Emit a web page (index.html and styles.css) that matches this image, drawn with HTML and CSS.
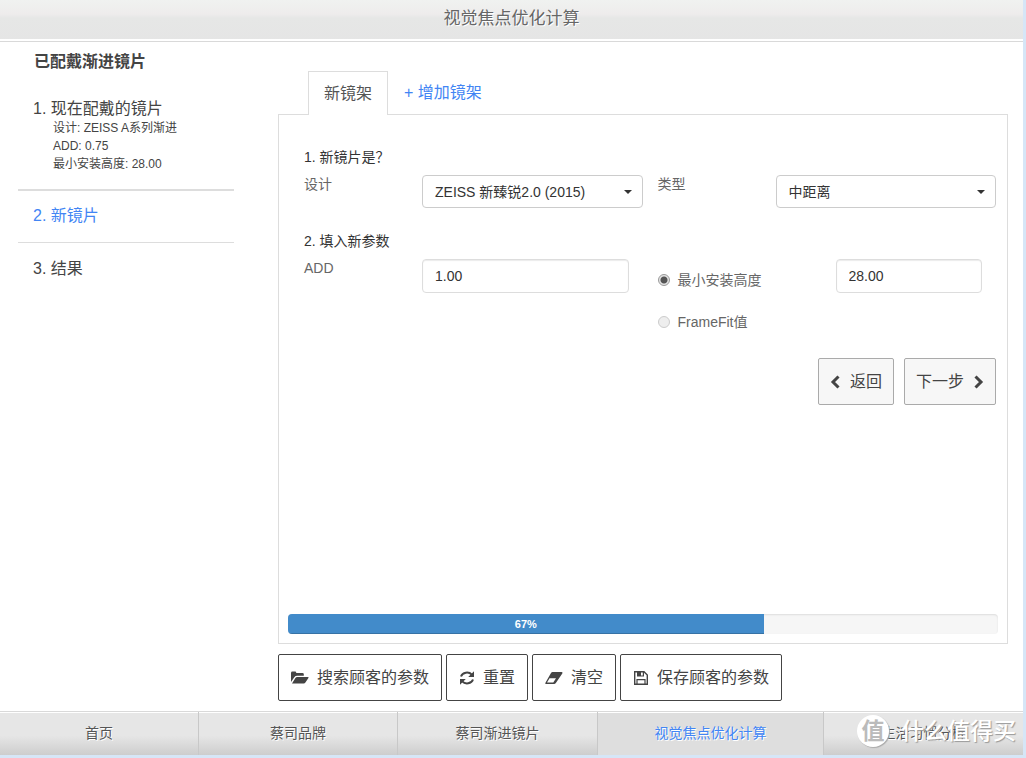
FILE: index.html
```html
<!DOCTYPE html>
<html lang="zh-CN">
<head>
<meta charset="utf-8">
<meta name="viewport" content="width=device-width, initial-scale=1">
<title>视觉焦点优化计算</title>
<link rel="stylesheet" href="styles.css">
</head>
<body>
<div class="app">
  <header class="topbar"><h1 class="topbar-title">视觉焦点优化计算</h1></header>

  <div class="content">
    <aside class="sidebar">
      <h2 class="sidebar-title">已配戴渐进镜片</h2>
      <section class="step step-done">
        <h3 class="step-title">1. 现在配戴的镜片</h3>
        <ul class="step-details">
          <li>设计: ZEISS A系列渐进</li>
          <li>ADD: 0.75</li>
          <li>最小安装高度: 28.00</li>
        </ul>
      </section>
      <section class="step step-active"><h3 class="step-title">2. 新镜片</h3></section>
      <section class="step"><h3 class="step-title">3. 结果</h3></section>
    </aside>

    <main class="main">
      <div class="tabs">
        <button type="button" class="tab tab-active">新镜架</button>
        <button type="button" class="tab">+ 增加镜架</button>
      </div>

      <div class="panel">
        <form class="form">
          <h3 class="form-heading">1. 新镜片是？</h3>
          <div class="form-row">
            <div class="field">
              <label class="field-label" for="design">设计</label>
              <div class="select-wrap"><select class="control select" id="design"><option>ZEISS 新臻锐2.0 (2015)</option></select></div>
            </div>
            <div class="field">
              <label class="field-label" for="type">类型</label>
              <div class="select-wrap"><select class="control select" id="type"><option>中距离</option></select></div>
            </div>
          </div>

          <h3 class="form-heading">2. 填入新参数</h3>
          <div class="form-row">
            <div class="field field-inset">
              <label class="field-label" for="add">ADD</label>
              <input class="control input" id="add" type="text" value="1.00">
            </div>
            <div class="field field-inset">
              <div class="radios">
                <label class="radio-label"><input class="radio" type="radio" name="mode" checked>最小安装高度</label>
                <label class="radio-label"><input class="radio" type="radio" name="mode">FrameFit值</label>
              </div>
              <input class="control input" type="text" value="28.00" aria-label="最小安装高度">
            </div>
          </div>

          <div class="form-actions">
            <button type="button" class="btn btn-soft">
              <svg class="chevron" viewBox="0 0 10 14" aria-hidden="true"><path d="M8.500 1.500 3 7l5.500 5.500"/></svg>返回
            </button>
            <button type="button" class="btn btn-soft">
              下一步<svg class="chevron" viewBox="0 0 10 14" aria-hidden="true"><path d="M1.500 1.500 7 7l-5.500 5.500"/></svg>
            </button>
          </div>
        </form>

        <div class="progress" role="progressbar" aria-valuenow="67" aria-valuemin="0" aria-valuemax="100">
          <div class="progress-bar" style="width: 67%">67%</div>
        </div>
      </div>

      <div class="toolbar">
        <button type="button" class="btn">
          <svg class="icon icon-wide" viewBox="0 0 18 14" aria-hidden="true"><path fill="currentColor" d="M0 11V2Q0 .6 1.400.6H4Q5.300.6 5.300 2h6.200q1.300 0 1.300 1.300v1.500H6.200Q4.400 4.800 3.300 6.200zM1 12.400 4.400 7Q5 6 6.200 6H17q1 0 .4 1l-3 4.600q-.6 1-1.700 1H1.200z"/></svg>搜索顾客的参数
        </button>
        <button type="button" class="btn">
          <svg class="icon" viewBox="0 0 16 16" aria-hidden="true"><path fill="none" stroke="currentColor" stroke-width="2" d="M2 6.500A6.200 5.500 0 0 1 12.800 4.700M14 9.500A6.200 5.500 0 0 1 3.200 11.300"/><path fill="currentColor" d="M15 1.200V7H9.200zM1 14.800V9h5.800z"/></svg>重置
        </button>
        <button type="button" class="btn">
          <svg class="icon icon-wide" viewBox="0 0 18 14" aria-hidden="true"><path fill="currentColor" d="M7.500 1H16.500q1.500 0 .8 1.400L11 11.800Q10.200 13 9 13H1.200Q-.2 13 .6 11.600L6 2Q6.600 1 7.500 1z"/><path fill="#fff" d="M4.500 7.300H11L8.300 11.600H2z"/></svg>清空
        </button>
        <button type="button" class="btn">
          <svg class="icon" viewBox="0 0 16 16" aria-hidden="true"><path fill="none" stroke="currentColor" stroke-width="1.400" d="M1.700 1.700H11L14.300 5V14.300H1.700z"/><path fill="none" stroke="currentColor" stroke-width="1.200" d="M4 14V9.600h8V14"/><path fill="currentColor" d="M4 1.500h7v5H4z"/><path fill="#fff" d="M8 2.500h1.800v3H8z"/></svg>保存顾客的参数
        </button>
      </div>
    </main>
  </div>

  <nav class="bottom-nav">
    <a class="nav-item" href="#">首页</a>
    <a class="nav-item" href="#">蔡司品牌</a>
    <a class="nav-item" href="#">蔡司渐进镜片</a>
    <a class="nav-item nav-current" href="#">视觉焦点优化计算</a>
    <a class="nav-item" href="#">生活习惯分析</a>
    <div class="watermark"><span class="watermark-badge">值</span><span class="watermark-text">什么值得买</span></div>
  </nav>
</div>
</body>
</html>
```
FILE: styles.css
```css
* { box-sizing: border-box; }

body {
  margin: 0;
  background: #d6e6f7;
  color: #444;
  font-family: "Liberation Sans", "Noto Sans CJK SC", sans-serif;
  font-size: 14px;
  line-height: 20px;
}

h1, h2, h3, ul { margin: 0; padding: 0; font-weight: 400; }
ul { list-style: none; }
button, input, select { font: inherit; color: inherit; }

.app {
  display: flex;
  flex-direction: column;
  min-height: calc(100vh - 3px);
  margin-right: 3px;
  background: #fff;
}

.topbar {
  padding: 7px 0 11px;
  background: linear-gradient(#f0f2f0, #eeecec 14px, #e6e7e6 18px, #e5e5e5);
  border-bottom: 1px solid #d9d9d9;
  box-shadow: inset 0 -2px #fff;
  text-align: center;
}
.topbar-title {
  color: #666;
  font-size: 17px;
  line-height: 23px;
  text-shadow: 1px 1px #fff;
}

.content {
  flex: 1;
  display: flex;
  gap: 44px;
  padding: 0 15px 10px 18px;
}

.sidebar { flex: 0 0 216px; }
.sidebar-title {
  padding: 10px 16px 27px;
  font-size: 16px;
  font-weight: 700;
}
.step { padding: 16px 15px; border-bottom: 1px solid #ddd; }
.step:last-child { border-bottom: 0; }
.step-done { padding-top: 0; border-bottom: 2px solid #ddd; }
.step-title { font-size: 16px; }
.step-details { padding-left: 20px; font-size: 12px; line-height: 18px; }
.step-active { padding-top: 15px; color: #4285f4; }

.main {
  flex: 1;
  display: flex;
  flex-direction: column;
  padding-top: 29px;
}
.tabs { display: flex; padding-left: 30px; }
.tab {
  height: 43px;
  padding: 0 15px;
  border: 1px solid transparent;
  border-bottom: 0;
  background: none;
  color: #4285f4;
  font-size: 16px;
}
.tab-active {
  position: relative;
  height: 44px;
  margin-bottom: -1px;
  border-color: #ddd;
  background: #fff;
  color: #555;
}

.panel {
  flex: 1;
  display: flex;
  flex-direction: column;
  justify-content: space-between;
  padding: 32px 9px 9px;
  border: 1px solid #ddd;
}
.form { padding: 0 2px 0 16px; }
.form-heading { color: #333; font-size: 14px; }
.form-row {
  display: grid;
  grid-template-columns: 1fr 1fr;
  gap: 15px;
  padding: 8px 0 23px;
}
.field { display: flex; align-items: flex-start; }
.field-inset { padding-right: 14px; }
.field-label {
  flex: 0 0 118px;
  margin-top: -1px;
  color: #666;
}
.select-wrap { position: relative; flex: 1; }
.select-wrap::after {
  content: "";
  position: absolute;
  top: 15px;
  right: 11px;
  border: 4px solid transparent;
  border-top-color: #333;
  border-bottom: 0;
  pointer-events: none;
}
.control {
  flex: 1;
  width: 100%;
  min-width: 0;
  height: 33px;
  padding: 0 12px;
  border: 1px solid #ccc;
  border-radius: 4px;
  background: #fff;
  color: #333;
}
.select { appearance: none; }
.input {
  height: 34px;
  border-color: #ddd;
  box-shadow: inset 0 1px 1px rgba(0, 0, 0, 0.08);
}
.radios {
  flex: 0 0 178px;
  display: grid;
  gap: 22px;
  padding-top: 11px;
}
.radio-label {
  display: flex;
  align-items: center;
  gap: 8px;
  color: #666;
}
.radio {
  appearance: none;
  width: 12px;
  height: 12px;
  margin: 0;
  border: 1px solid #ccc;
  border-radius: 50%;
  background: #eee;
}
.radio:checked {
  border-color: #999;
  background: radial-gradient(#555 3px, #e4e4e4 4px);
}

.btn {
  display: flex;
  align-items: center;
  gap: 8px;
  height: 47px;
  padding: 0 12px;
  border: 1px solid #444;
  border-radius: 2px;
  background: #fff;
  color: #444;
  font-size: 16px;
  white-space: nowrap;
}
.btn-soft { gap: 10px; padding: 0 11px; border-color: #aaa; background: #f7f7f7; }
.form-actions {
  display: flex;
  justify-content: flex-end;
  gap: 10px;
  padding-top: 3px;
}
.chevron {
  width: 10px;
  height: 14px;
  fill: none;
  stroke: #444;
  stroke-width: 3;
}
.icon { width: 16px; height: 16px; }
.icon-wide { width: 18px; height: 14px; }

.progress {
  height: 20px;
  border-radius: 4px;
  background: #f6f6f6;
  box-shadow: inset 0 1px 2px rgba(0, 0, 0, 0.1);
  overflow: hidden;
}
.progress-bar {
  height: 100%;
  background: #428bca;
  box-shadow: inset 0 -1px rgba(0, 0, 0, 0.18);
  color: #fff;
  font-size: 11px;
  font-weight: 700;
  text-align: center;
}
.toolbar { display: flex; gap: 4px; padding-top: 10px; }

.bottom-nav {
  position: relative;
  display: grid;
  grid-template-columns: 199fr 199fr 200fr 226fr 199fr;
  border-top: 1px solid #d9d9d9;
}
.nav-item {
  padding: 11px 0 12px;
  border-right: 1px solid #c8c8c8;
  background: linear-gradient(#e6e6e6 55%, #cdcdcd);
  box-shadow: inset 0 1px #fff;
  color: #555;
  text-align: center;
  text-decoration: none;
  text-shadow: 1px 1px #fff;
}
.nav-item:nth-child(5) { border-right: 0; }
.nav-current { background: #dedede; color: #4285f4; }

.watermark {
  position: absolute;
  top: 3px;
  right: 7px;
  display: flex;
  align-items: center;
  gap: 12px;
  color: #fff;
  font-size: 23px;
  font-weight: 500;
  line-height: 32px;
  pointer-events: none;
}
.watermark-badge {
  width: 32px;
  height: 32px;
  border-radius: 50%;
  background: #fff;
  box-shadow: 1px 1px 1px #aaa;
  color: #bbb;
  font-weight: 700;
  text-align: center;
}
.watermark-text { text-shadow: 1px 1px 1px #999; }
```
